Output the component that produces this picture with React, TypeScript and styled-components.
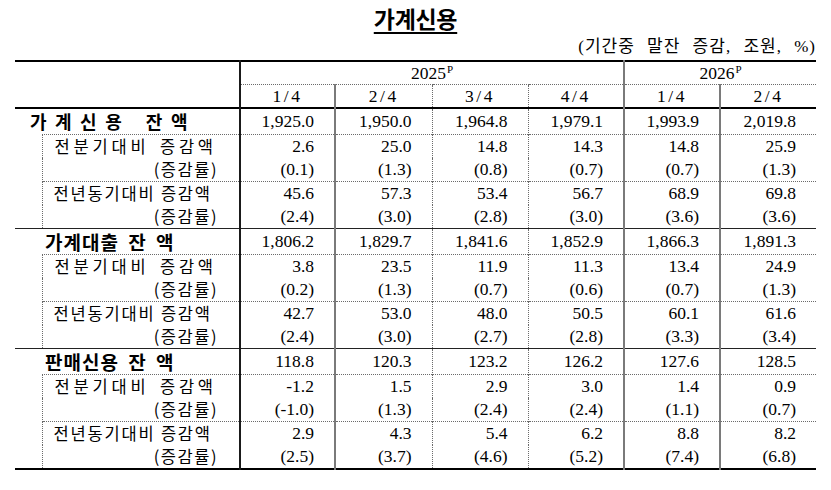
import React from "react";
import styled, { createGlobalStyle, css } from "styled-components";

const GlobalStyle = createGlobalStyle`
  html, body {
    margin: 0;
    padding: 0;
    background: #ffffff;
  }
  body {
    font-family: "Liberation Serif", "Noto Sans CJK KR", serif;
    color: #000;
  }
`;

type SubRow = { label: string; kind: "qoq" | "yoy" | "rate"; values: string[] };
type Section = { title: string; spaced?: boolean; values: string[]; rows: SubRow[] };

const sections: Section[] = [
  {
    title: "가계신용 잔액",
    spaced: true,
    values: ["1,925.0", "1,950.0", "1,964.8", "1,979.1", "1,993.9", "2,019.8"],
    rows: [
      { label: "전분기대비 증감액", kind: "qoq", values: ["2.6", "25.0", "14.8", "14.3", "14.8", "25.9"] },
      { label: "(증감률)", kind: "rate", values: ["(0.1)", "(1.3)", "(0.8)", "(0.7)", "(0.7)", "(1.3)"] },
      { label: "전년동기대비 증감액", kind: "yoy", values: ["45.6", "57.3", "53.4", "56.7", "68.9", "69.8"] },
      { label: "(증감률)", kind: "rate", values: ["(2.4)", "(3.0)", "(2.8)", "(3.0)", "(3.6)", "(3.6)"] },
    ],
  },
  {
    title: "가계대출 잔 액",
    values: ["1,806.2", "1,829.7", "1,841.6", "1,852.9", "1,866.3", "1,891.3"],
    rows: [
      { label: "전분기대비 증감액", kind: "qoq", values: ["3.8", "23.5", "11.9", "11.3", "13.4", "24.9"] },
      { label: "(증감률)", kind: "rate", values: ["(0.2)", "(1.3)", "(0.7)", "(0.6)", "(0.7)", "(1.3)"] },
      { label: "전년동기대비 증감액", kind: "yoy", values: ["42.7", "53.0", "48.0", "50.5", "60.1", "61.6"] },
      { label: "(증감률)", kind: "rate", values: ["(2.4)", "(3.0)", "(2.7)", "(2.8)", "(3.3)", "(3.4)"] },
    ],
  },
  {
    title: "판매신용 잔 액",
    values: ["118.8", "120.3", "123.2", "126.2", "127.6", "128.5"],
    rows: [
      { label: "전분기대비 증감액", kind: "qoq", values: ["-1.2", "1.5", "2.9", "3.0", "1.4", "0.9"] },
      { label: "(증감률)", kind: "rate", values: ["(-1.0)", "(1.3)", "(2.4)", "(2.4)", "(1.1)", "(0.7)"] },
      { label: "전년동기대비 증감액", kind: "yoy", values: ["2.9", "4.3", "5.4", "6.2", "8.8", "8.2"] },
      { label: "(증감률)", kind: "rate", values: ["(2.5)", "(3.7)", "(4.6)", "(5.2)", "(7.4)", "(6.8)"] },
    ],
  },
];

const quarters = ["1/4", "2/4", "3/4", "4/4", "1/4", "2/4"];
const colWidths = [95, 97, 96, 96, 96, 96];

const DOT = "1px dotted #6b6b6b";

// vertical rule on the left of each data column
const leftRule = (i: number) => {
  if (i === 0) return "2px solid #1a1a1a";
  if (i === 2 || i === 3) return DOT;
  return "2px solid #7a7a7a";
};

const Page = styled.div`
  width: 831px;
  padding: 0 0 0 15px;
  box-sizing: border-box;
`;

const Title = styled.h1`
  width: 801px;
  margin: 0;
  padding-top: 5px;
  height: 33px;
  box-sizing: border-box;
  text-align: center;
  font-family: "Noto Sans CJK KR", sans-serif;
  font-size: 23px;
  font-weight: 700;
  line-height: 26px;
  letter-spacing: -0.3px;

  span {
    text-decoration: underline;
    text-decoration-thickness: 1.5px;
    text-underline-offset: 4px;
  }
`;

const Unit = styled.div`
  width: 801px;
  height: 27px;
  text-align: right;
  font-family: "Liberation Serif", "Noto Sans CJK KR", serif;
  font-size: 17px;
  line-height: 27px;
  letter-spacing: 1px;
  word-spacing: 7px;
`;

const Table = styled.table`
  width: 801px;
  border-collapse: collapse;
  table-layout: fixed;
  border-top: 2px solid #000;
  border-bottom: 2px solid #000;
`;

const HeadCell = styled.th<{ $left: string; $dotTop?: boolean }>`
  height: 22px;
  padding: 0;
  font-weight: 400;
  font-size: 17.5px;
  text-align: center;
  line-height: 22px;
  border-left: ${({ $left }) => $left};
  ${({ $dotTop }) =>
    $dotTop &&
    css`
      border-top: ${DOT};
    `}
`;

const Quarter = styled.span`
  letter-spacing: 2.5px;
`;

const Sup = styled.sup`
  font-size: 11px;
  vertical-align: 6px;
  line-height: 0;
  margin-left: 1px;
`;

const HeadRow = styled.tr`
  border-bottom: 2px solid #000;
`;

const SectionRow = styled.tr<{ $first?: boolean }>`
  border-top: ${({ $first }) => ($first ? "none" : "1px solid #222")};
`;

const SectionLabel = styled.td<{ $spaced?: boolean }>`
  height: 25px;
  padding: 0 0 0 ${({ $spaced }) => ($spaced ? "15px" : "30px")};
  font-family: "Noto Sans CJK KR", sans-serif;
  font-weight: 700;
  font-size: ${({ $spaced }) => ($spaced ? "18px" : "19px")};
  line-height: 25px;
  white-space: nowrap;
  letter-spacing: ${({ $spaced }) => ($spaced ? "8.5px" : "1px")};
  word-spacing: ${({ $spaced }) => ($spaced ? "3px" : "4px")};
`;

const Spacer = styled.td`
  padding: 0;
`;

const SubLabel = styled.td<{ $kind: SubRow["kind"]; $dotTop: boolean }>`
  height: 23px;
  padding: 0;
  font-family: "Noto Sans CJK KR", sans-serif;
  font-size: 16.5px;
  line-height: 23px;
  white-space: nowrap;
  border-left: ${DOT};
  border-top: ${({ $dotTop }) => ($dotTop ? DOT : "none")};
  ${({ $kind }) =>
    $kind === "rate"
      ? css`
          text-align: right;
          padding-right: 21px;
          letter-spacing: 1.5px;
        `
      : $kind === "qoq"
      ? css`
          padding-left: 12px;
          letter-spacing: 3.8px;
          word-spacing: 3px;
        `
      : css`
          padding-left: 11px;
          letter-spacing: 1.8px;
        `}
`;

const Num = styled.td<{ $left: string; $dotTop?: boolean }>`
  padding: 0 20px 0 0;
  text-align: right;
  font-size: 17.5px;
  white-space: nowrap;
  border-left: ${({ $left }) => $left};
  border-top: ${({ $dotTop }) => ($dotTop ? DOT : "none")};
`;

export default function App() {
  return (
    <Page>
      <GlobalStyle />
      <Title>
        <span>가계신용</span>
      </Title>
      <Unit>(기간중 말잔 증감, 조원, %)</Unit>
      <Table>
        <colgroup>
          <col style={{ width: 27 }} />
          <col style={{ width: 198 }} />
          {colWidths.map((w, i) => (
            <col key={i} style={{ width: w }} />
          ))}
        </colgroup>
        <thead>
          <tr>
            <th colSpan={2} rowSpan={2} />
            <HeadCell colSpan={4} $left={leftRule(0)}>
              2025<Sup>P</Sup>
            </HeadCell>
            <HeadCell colSpan={2} $left={leftRule(4)}>
              2026<Sup>P</Sup>
            </HeadCell>
          </tr>
          <HeadRow>
            {quarters.map((q, i) => (
              <HeadCell key={i} $left={leftRule(i)} $dotTop>
                <Quarter>{q}</Quarter>
              </HeadCell>
            ))}
          </HeadRow>
        </thead>
        <tbody>
          {sections.map((s, si) => (
            <React.Fragment key={si}>
              <SectionRow $first={si === 0}>
                <SectionLabel colSpan={2} $spaced={s.spaced}>
                  {s.title}
                </SectionLabel>
                {s.values.map((v, i) => (
                  <Num key={i} $left={leftRule(i)}>
                    {v}
                  </Num>
                ))}
              </SectionRow>
              {s.rows.map((r, ri) => {
                const dotTop = r.kind !== "rate";
                return (
                  <tr key={ri}>
                    {ri === 0 && <Spacer rowSpan={4} />}
                    <SubLabel $kind={r.kind} $dotTop={dotTop}>
                      {r.label}
                    </SubLabel>
                    {r.values.map((v, i) => (
                      <Num key={i} $left={leftRule(i)} $dotTop={dotTop}>
                        {v}
                      </Num>
                    ))}
                  </tr>
                );
              })}
            </React.Fragment>
          ))}
        </tbody>
      </Table>
    </Page>
  );
}
